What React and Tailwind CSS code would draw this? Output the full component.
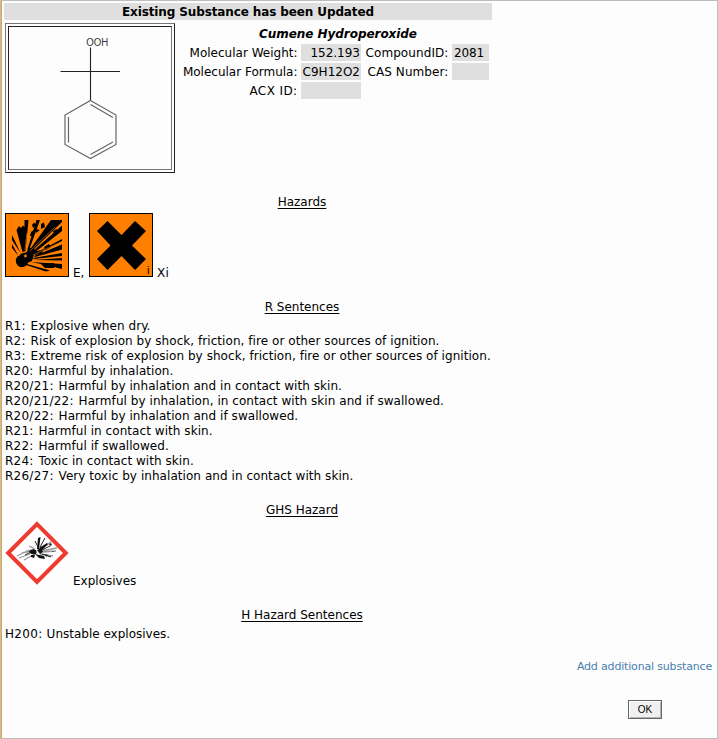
const sentences = [
  ["R1:", "Explosive when dry."],
  ["R2:", "Risk of explosion by shock, friction, fire or other sources of ignition."],
  ["R3:", "Extreme risk of explosion by shock, friction, fire or other sources of ignition."],
  ["R20:", "Harmful by inhalation."],
  ["R20/21:", "Harmful by inhalation and in contact with skin."],
  ["R20/21/22:", "Harmful by inhalation, in contact with skin and if swallowed."],
  ["R20/22:", "Harmful by inhalation and if swallowed."],
  ["R21:", "Harmful in contact with skin."],
  ["R22:", "Harmful if swallowed."],
  ["R24:", "Toxic in contact with skin."],
  ["R26/27:", "Very toxic by inhalation and in contact with skin."],
];

function Structure() {
  return (
    <svg width="162" height="142" viewBox="9 27 162 142" fill="none" stroke="#666" strokeWidth="1.2">
      <path d="M90.500 47.500V100.500M60.500 71.500H120" stroke="#222" strokeWidth="1.1" />
      <path d="M90.500 100.500L116 115V144.500L90.500 158.500L65 144.500V115Z" />
      <path d="M90.500 104.500L113 117.500M113 142L90.500 154.500M68.500 117V142.500" />
      <text x="86.200" y="45.600" fontSize="10" textLength="22" lengthAdjust="spacingAndGlyphs" fill="#333" stroke="none" fontFamily="Liberation Sans, sans-serif">OOH</text>
    </svg>
  );
}

function ExplosiveSign() {
  return (
    <svg width="64" height="64" viewBox="0 0 64 64">
      <rect x=".5" y=".5" width="63" height="63" fill="#ff8000" stroke="#000" />
      <circle cx="17" cy="48" r="6.200" />
      <path d="M17.500 39L11.500 17L14 13L16 15L18 12.500L19.500 14V7H23.500L20.500 38ZM15.500 40L7 27V22L10 28ZM13.500 43L7 35V31Z" />
      <path d="M22.500 36L31.500 7H35L24.500 36ZM24.500 37L46 7H57V9L27 38ZM27 39L57 12.500V18L29 40ZM29 41L57 26V28L30 42ZM29 43L57 31.500V36.500L30 44ZM28 45L57 40V43L29 46ZM28 47L57 45V47.500ZM26 49L57 51V56L41 52ZM22 51L45 57.500L41 58.500L21 52Z" />
      <path d="M15 41L22 39L23 35L28 35L31 38L38 37L37 41L29 42L27 48L22 50Z" />
      <path d="M27 12L29 9.500L31 12L28 15ZM36 11L39 9.500L40 14L36 16ZM26 19L29 17L28 23L25 23ZM31 16L35 17L31 20ZM48 18L52 16L53 20L49 21ZM39 34L44 31L46 34L41 37ZM36 51L49 50L49 55L40 55Z" />
      <path d="M20 37L22 20M25 38L50 14M28 42L52 31" stroke="#ff8000" strokeWidth=".6" />
      <circle cx="20.500" cy="43" r="1.400" fill="#ff8000" />
    </svg>
  );
}

function IrritantSign() {
  return (
    <svg width="64" height="64" viewBox="0 0 64 64">
      <rect x=".5" y=".5" width="63" height="63" fill="#ff8000" stroke="#000" />
      <path d="M18.500 8L32.500 22L46 8L57 18L43 32.500L57 46L46 57L32.500 43L18.500 57L8 46L21.500 32.500L8 18Z" />
      <text x="58" y="61" fontSize="11" fontFamily="Liberation Sans, sans-serif">i</text>
    </svg>
  );
}

function GhsSign() {
  return (
    <svg width="64" height="64" viewBox="0 0 64 64">
      <path d="M32 3.200L60.800 32L32 60.800L3.200 32Z" fill="#fff" stroke="#ee3a2f" strokeWidth="4" />
      <path d="M12 35L24 29M14 37L25 33M17 32L26 30M19 39L26 35M37 28L47 20M37 30L52 27M38 31L51 30M35 33L48 35M30 28L24 25" stroke="#999" strokeWidth="1.300" />
      <path d="M32 28L33 17L35.500 16L34 28ZM34 27L42 22L43 23L36 30ZM25 29L29 28L30 32L26 33L24 31ZM32 29L36 27L38 31L35 33ZM30 33L39 35L40 38L34 37ZM26 34L30 34L29 37L26 36Z" fill="#111" />
      <circle cx="29" cy="31" r="2.600" fill="#111" />
      <path d="M33 26L30 20M35 26L40 17M37 29L45 25M37 33L46 36M20 34L26 31" stroke="#222" strokeWidth="1" />
      <path d="M44 23L46 22L47 24L45 25ZM40 33L43 34L41 36ZM47 30L49 30L48 31Z" fill="#222" />
    </svg>
  );
}

function Heading({ children }) {
  return <h2 className="text-center underline underline-offset-2">{children}</h2>;
}

function Sentence({ code, children }) {
  return (
    <p>
      <span className="mr-px tracking-[0.25px]">{code}</span>{" "}
      <span className="tracking-[0.055px]">{children}</span>
    </p>
  );
}

export default function App() {
  return (
    <div className="flex h-[739px] w-[718px] flex-col border border-[#bdbdbd] bg-[#fdfdfd] font-['DejaVu_Sans',sans-serif] text-[12px] leading-[15px] text-black">
      <main className="flex grow flex-col border-l border-[#e3a43c] pt-[2px] pl-[2px]">
        <h1 className="h-[17px] w-[488px] bg-[#dfdfdf] pt-[2px] text-center font-bold tracking-[-0.12px]">
          Existing Substance has been Updated
        </h1>
        <section className="mt-[3px] flex h-[150px] w-[488px] pl-px">
          <div className="h-[150px] w-[170px] border border-t-[#777] border-r-[#222] border-b-[#222] border-l-[#777] p-[2px]">
            <div className="flex h-[144px] w-[164px] border border-t-[#222] border-r-[#777] border-b-[#777] border-l-[#222]">
              <Structure />
            </div>
          </div>
          <div className="grow pt-[2px] whitespace-nowrap">
            <h2 className="h-[19px] pt-[2px] pl-[9px] text-center font-bold tracking-[-0.05px] italic">Cumene Hydroperoxide</h2>
            <div className="grid auto-rows-[17px] grid-cols-[123px_60px_85px_37px] gap-x-[3px] gap-y-[2px] text-right">
              <span className="pt-[2px] pr-[0.5px]">Molecular Weight:</span>
              <span className="bg-[#dfdfdf] pt-[2px] pr-px">152.193</span>
              <span className="pt-[2px] pr-[0.5px] tracking-[0.09px]">CompoundID:</span>
              <span className="bg-[#dfdfdf] pt-[2px] pl-[2px] text-left tracking-[-0.1px]">2081</span>
              <span className="pt-[2px] pr-[0.5px]">Molecular Formula:</span>
              <span className="bg-[#dfdfdf] pt-[2px] pr-px">C9H12O2</span>
              <span className="pt-[2px] pr-[0.5px] tracking-[0.09px]">CAS Number:</span>
              <span className="bg-[#dfdfdf]" />
              <span className="pt-[2px] pr-[0.5px] tracking-[0.4px]">ACX ID:</span>
              <span className="bg-[#dfdfdf]" />
            </div>
          </div>
        </section>
        <section className="mt-[22px] h-[105px] w-[595px] pl-px">
          <Heading>Hazards</Heading>
          <div className="mt-[3px] flex items-end">
            <ExplosiveSign />
            <span className="-mb-[4px] ml-[4px] w-[16px]">E,</span>
            <IrritantSign />
            <span className="-mb-[4px] ml-[4px] tracking-[0.2px]">Xi</span>
          </div>
        </section>
        <section className="h-[203px] w-[595px] pl-px whitespace-nowrap">
          <Heading>R Sentences</Heading>
          <div className="mt-[4px]">
            {sentences.map(([code, text]) => (
              <Sentence key={code} code={code}>{text}</Sentence>
            ))}
          </div>
        </section>
        <section className="h-[105px] w-[595px] pl-px">
          <Heading>GHS Hazard</Heading>
          <div className="mt-[3px] flex items-end">
            <GhsSign />
            <span className="-mb-[4px] ml-[4px]">Explosives</span>
          </div>
        </section>
        <section className="h-[51px] w-[595px] pl-px">
          <Heading>H Hazard Sentences</Heading>
          <p className="mt-[4px]">
            <span className="tracking-[0.3px]">H200: </span>
            <span className="tracking-normal">Unstable explosives.</span>
          </p>
        </section>
        <a className="mr-[5px] self-end text-[11px] tracking-[-0.17px] text-[#4a7faf]">Add additional substance</a>
        <button className="mt-[26px] mr-[55px] flex h-[19px] w-[34px] items-center justify-center self-end border border-[#666] bg-[#f0f0f0] font-['Liberation_Sans',sans-serif] text-[10px] leading-none shadow-[inset_1px_1px_#fff,inset_-1px_-1px_#b5b5b5]">
          OK
        </button>
      </main>
    </div>
  );
}
